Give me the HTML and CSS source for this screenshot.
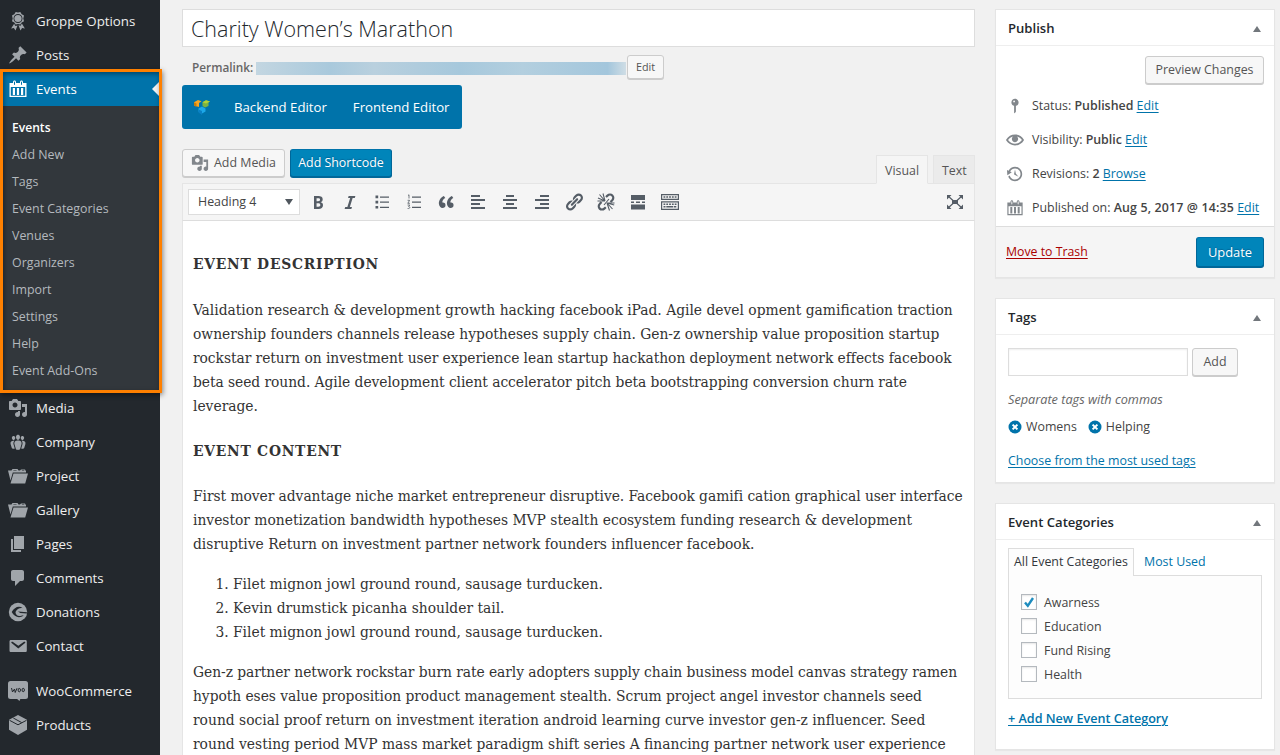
FILE: index.html
```html
<!DOCTYPE html>
<html lang="en">
<head>
<meta charset="utf-8">
<title>Edit Event</title>
<link rel="stylesheet" href="styles.css">
</head>
<body>
<svg class="defs" width="0" height="0">
  <symbol id="media" viewBox="0 0 20 20"><path fill-rule="evenodd" d="M13 11V4c0-.55-.45-1-1-1h-1.67L9 1H5L3.67 3H2c-.55 0-1 .45-1 1v7c0 .55.45 1 1 1h10c.55 0 1-.45 1-1zM7 4.5c1.38 0 2.5 1.12 2.5 2.5S8.38 9.500 7 9.500 4.500 8.380 4.500 7 5.620 4.500 7 4.500zM14 6h5v10.500c0 1.380-1.120 2.500-2.500 2.500S14 17.880 14 16.500s1.120-2.500 2.500-2.500c.17 0 .34.02.5.05V9h-3V6zm-4 8.050V13h2v3.500c0 1.380-1.120 2.500-2.500 2.500S7 17.880 7 16.500 8.120 14 9.500 14c.17 0 .34.02.5.05z"/></symbol>
  <symbol id="calendar" viewBox="0 0 20 20"><path fill-rule="evenodd" d="M15 4h3.500v14h-17V4H5V3c0-.83.67-1.500 1.500-1.500S8 2.170 8 3v1h4V3c0-.83.67-1.500 1.500-1.500S15 2.170 15 3v1zM6 3v2.500c0 .28.22.5.5.5s.5-.22.5-.5V3c0-.28-.22-.5-.5-.5S6 2.720 6 3zm7 0v2.500c0 .28.22.5.5.5s.5-.22.5-.5V3c0-.28-.22-.5-.5-.5s-.5.22-.5.5zM17.200 16.700V8H2.800v8.700zM7 16V9H4.800v7zm4.100 0V9H8.900v7zm4.100 0V9H13v7z"/></symbol>
  <symbol id="folder" viewBox="0 0 20 20"><path fill-rule="evenodd" d="M0 4.500h3.500L4.500 3h5l1 1.500H12L13 3.500h4l.8 1.500H18v1.500H4.800L2.500 14.500zM5.200 4.500h3.600l-.5-.6H5.600zm8.500 0h2.800l-.4-.5h-2zM5.500 7.500H20L17.200 17.500H2.500z"/></symbol>
</svg>

<div class="layout">
  <nav class="menu">
    <a class="item"><svg viewBox="0 0 20 20"><path fill-rule="evenodd" d="M4 4.500L4.700 7.460l-.7 2.900 2.300 1.240L7.700 13.600l2.300-.6 2.300.6 1.400-2L16 10.360 15.300 7.460 16 4.500l-2.300-1.200L12.300 1l-2.300.6L7.700 1 6.300 3.300zM10 12c-2.500 0-4.500-2-4.500-4.500S7.500 3 10 3s4.500 2 4.500 4.500S12.500 12 10 12zM13.850 12.600l-1.280 2.240-2.080-.47L12.500 19.500l1.600-2.400 2.800.3zM6.150 12.670l1.250 2.250 2.130-.51L7.500 19.500l-1.600-2.400-2.800.3z"/><circle cx="10" cy="7.500" r="3.600"/></svg>Groppe Options</a>
    <a class="item"><svg viewBox="0 0 20 20"><path d="M10.440 3.020l1.820-1.820 6.360 6.350-1.830 1.820c-1.050-.68-2.480-.57-3.410.36l-.75.75c-.92.93-1.040 2.350-.35 3.410l-1.830 1.820-2.410-2.410-2.800 2.790c-.42.42-3.380 2.710-3.800 2.290s1.860-3.390 2.280-3.810l2.790-2.790L4.100 9.360l1.830-1.820c1.050.69 2.480.57 3.400-.36l.75-.75c.93-.92 1.050-2.350.36-3.410z"/></svg>Posts</a>
    <div class="open">
      <a class="item current"><svg><use href="#calendar"/></svg>Events</a>
      <div class="submenu"><b>Events</b><a>Add New</a><a>Tags</a><a>Event Categories</a><a>Venues</a><a>Organizers</a><a>Import</a><a>Settings</a><a>Help</a><a>Event Add-Ons</a></div>
      <div class="highlight"></div>
    </div>
    <a class="item"><svg><use href="#media"/></svg>Media</a>
    <a class="item"><svg viewBox="0 0 20 20"><path d="M8.030 4.460c-.29 1.280.55 3.460 1.970 3.460 1.410 0 2.250-2.180 1.960-3.460-.22-.98-1.080-1.630-1.960-1.630-.89 0-1.740.65-1.970 1.630zm-4.130.9c-.25 1.080.47 2.930 1.670 2.930s1.920-1.850 1.670-2.930c-.19-.83-.92-1.390-1.670-1.390s-1.480.56-1.670 1.390zm8.860 0c-.25 1.080.47 2.930 1.660 2.930 1.200 0 1.920-1.850 1.670-2.930-.19-.83-.92-1.390-1.670-1.390-.74 0-1.470.56-1.660 1.390zm-.59 11.430l1.250-4.300C14.200 10 12.710 8.470 10 8.470c-2.720 0-4.210 1.530-3.440 4.020l1.260 4.300C8.050 17.510 9 18 10 18c.98 0 1.940-.49 2.170-1.210zm-6.100-7.630c-.49.67-.96 1.830-.42 3.590l1.120 3.790c-.34.2-.77.31-1.200.31-.85 0-1.650-.41-1.850-1.030l-1.070-3.650c-.65-2.110.61-3.400 2.920-3.400.27 0 .54.02.79.06-.1.1-.2.22-.29.33zm8.350-.39c2.310 0 3.580 1.290 2.920 3.400l-1.070 3.650c-.2.62-1 1.030-1.850 1.030-.43 0-.86-.11-1.200-.31l1.110-3.770c.55-1.780.08-2.940-.42-3.610-.08-.11-.18-.23-.28-.33.25-.04.51-.06.79-.06z"/></svg>Company</a>
    <a class="item"><svg><use href="#folder"/></svg>Project</a>
    <a class="item"><svg><use href="#folder"/></svg>Gallery</a>
    <a class="item"><svg viewBox="0 0 20 20"><path d="M6 15V2h10v13H6zm-1 1h8v2H3V5h2v11z"/></svg>Pages</a>
    <a class="item"><svg viewBox="0 0 20 20"><path d="M5 2h9c1.100 0 2 .9 2 2v7c0 1.100-.9 2-2 2h-2l-5 5v-5H5c-1.100 0-2-.9-2-2V4c0-1.100.9-2 2-2z"/></svg>Comments</a>
    <a class="item"><svg viewBox="0 0 20 20"><circle cx="10" cy="10" r="9.200"/><path class="cut" d="M14.800 6.200C11 3.200 6.400 5.200 3.700 10c2.800 5 7.800 7 12 3.200l-2.600.6C9.500 14.800 7.500 12.500 7.500 10c1.500-3 4-4.300 7.300-3.800zM10 9.600l9 .7-.2 1.200-6.500-.4z"/></svg>Donations</a>
    <a class="item"><svg viewBox="0 0 20 20"><path fill-rule="evenodd" d="M3 4h14.300c1 0 1.500.5 1.500 1.500v9c0 1-.5 1.500-1.500 1.500H3c-1 0-1.500-.5-1.500-1.500v-9C1.500 4.500 2 4 3 4zm7.300 8.600l6.740-5.530c.24-.2.43-.66.13-1.070-.29-.41-.82-.42-1.170-.17l-5.700 3.860L4.600 5.830c-.35-.25-.88-.24-1.170.17-.3.41-.11.87.13 1.070z"/></svg>Contact</a>
    <a class="item shop"><svg viewBox="0 0 20 20"><rect y="0" width="20" height="18" rx="2.500"/><path d="M8.500 17.500l3 2.500 1-2.500z"/><path class="ink" d="M3.500 7l1 4L6.500 8l.7 3.500L9 7.200"/><ellipse class="ink" cx="11.300" cy="9.100" rx="1.200" ry="1.700"/><ellipse class="ink" cx="15.200" cy="9" rx="1.200" ry="1.700"/></svg>WooCommerce</a>
    <a class="item"><svg viewBox="0 0 20 20"><path d="M10 0l9 4.800v10L10 20l-9-5.200v-10z"/><path class="ink" d="M1.500 5.300L10 9.800l8.500-4.500M5.300 3l8.400 4.600"/></svg>Products</a>
  </nav>

  <main class="editor">
    <div class="title">Charity Women’s Marathon</div>
    <div class="permalink"><b>Permalink:</b><span class="url"></span><a class="btn small">Edit</a></div>
    <div class="composer">
      <svg viewBox="0 0 18 18"><path fill="#f5a623" d="M1 4.200L5 2l3.500 1.200L6 5v4L1 7.500z"/><path fill="#c77d0a" d="M1 4.200l2.500 1.400V9L1 7.500z"/><path fill="#7cb342" d="M9.500 4.200L13 2.200l4 1.300-1.500 1V8L12 9.500 9.500 8z"/><path fill="#b5d334" d="M9.500 4.200L13 2.200l4 1.300-4 2z"/><path fill="#1ca8e8" d="M5.500 10.500L9 8.500l3.500 2v3L9 15.500l-3.500-2z"/><path fill="#0a80c4" d="M5.500 11.500L9 13v4l-3.500-2.500z"/></svg>
      <span>Backend Editor</span><span>Frontend Editor</span>
    </div>
    <div class="tools">
      <a class="btn media"><svg><use href="#media"/></svg>Add Media</a>
      <a class="btn primary">Add Shortcode</a>
      <div class="tabs"><a class="tab active">Visual</a><a class="tab">Text</a></div>
    </div>
    <div class="toolbar">
      <div class="select">Heading 4<i></i></div>
      <div class="icons">
        <svg viewBox="0 0 20 20"><path fill-rule="evenodd" d="M6 4v13h4.540c1.370 0 2.460-.33 3.260-1 .8-.66 1.200-1.580 1.200-2.770 0-.84-.17-1.510-.51-2.010s-.9-.85-1.670-1.030v-.09c.57-.1 1.020-.4 1.360-.9s.51-1.130.51-1.910c0-1.140-.39-1.980-1.170-2.500C12.750 4.260 11.500 4 9.780 4H6zm2.570 5.150V6.260h1.360c.73 0 1.270.11 1.610.32.34.22.51.58.51 1.070 0 .54-.16.92-.47 1.150s-.82.35-1.510.35h-1.500zm0 2.190h1.600c1.440 0 2.160.53 2.160 1.610 0 .6-.17 1.050-.51 1.340s-.86.43-1.570.43H8.570v-3.380z"/></svg>
        <svg viewBox="0 0 20 20"><path d="M14.780 6h-2.130l-2.800 9h2.120l-.62 2H4.600l.62-2h2.140l2.800-9H8.030l.62-2h6.750z"/></svg>
        <svg viewBox="0 0 20 20"><path d="M3.500 3.500h2.700v2.700H3.500zM3.500 8.700h2.700v2.700H3.500zM3.500 13.900h2.700v2.700H3.500zM8 4.500h9v1.200H8zM8 9.500h9v1.200H8zM8 14.700h9v1.200H8z"/></svg>
        <svg viewBox="0 0 20 20"><path d="M8 4.500h9v1.200H8zM8 9.500h9v1.200H8zM8 14.700h9v1.200H8z"/><path class="num" d="M4 3.500l1-.7v3.700M3.600 8.300h2l-1.800 3h2.100M3.600 13h2.200l-1.200 1.600c2 .1 1.500 2.300-1 1.900"/></svg>
        <svg viewBox="0 0 20 20"><path d="M9.490 13.220c0-.74-.2-1.380-.61-1.900-.62-.78-1.830-.88-2.530-.72-.29-1.650 1.110-3.750 2.920-4.650L7.880 4c-2.730 1.300-5.420 4.280-4.960 8.050C3.210 14.430 4.590 16 6.540 16c.85 0 1.560-.25 2.120-.75s.83-1.180.83-2.030zm8.050 0c0-.74-.2-1.380-.61-1.900-.63-.78-1.830-.88-2.530-.72-.29-1.650 1.110-3.750 2.920-4.650L15.930 4c-2.730 1.300-5.410 4.280-4.950 8.050.29 2.380 1.660 3.950 3.610 3.950.85 0 1.560-.25 2.120-.75s.83-1.180.83-2.030z"/></svg>
        <svg viewBox="0 0 20 20"><path d="M3 3h9v2H3zM3 7h14v2H3zM3 11h9v2H3zM3 15h14v2H3z"/></svg>
        <svg viewBox="0 0 20 20"><path d="M6 3h8v2H6zM3 7h14v2H3zM6 11h8v2H6zM3 15h14v2H3z"/></svg>
        <svg viewBox="0 0 20 20"><path d="M8 3h9v2H8zM3 7h14v2H3zM8 11h9v2H8zM3 15h14v2H3z"/></svg>
        <svg viewBox="0 0 20 20"><path d="M17.740 2.760c1.680 1.690 1.680 4.410 0 6.100l-1.530 1.520c-1.120 1.120-2.700 1.470-4.140 1.090l2.620-2.610.76-.77.76-.76c.84-.84.84-2.200 0-3.040-.84-.85-2.200-.85-3.040 0l-.77.76-3.380 3.380c-.37-1.440-.02-3.020 1.100-4.140l1.520-1.530c1.690-1.680 4.420-1.680 6.100 0zM8.590 13.430l5.340-5.340c.42-.42.42-1.100 0-1.520-.44-.43-1.130-.39-1.530 0l-5.330 5.340c-.42.42-.42 1.100 0 1.520.44.43 1.130.39 1.520 0zm-.76 2.290l4.140-4.150c.38 1.440.03 3.020-1.090 4.140l-1.520 1.530c-1.690 1.680-4.410 1.680-6.100 0-1.680-1.680-1.680-4.420 0-6.100l1.530-1.520c1.120-1.120 2.700-1.470 4.140-1.100l-4.140 4.150c-.85.84-.85 2.200 0 3.050.84.84 2.200.84 3.040 0z"/></svg>
        <svg viewBox="0 0 20 20"><g class="line"><path stroke-width="2.200" d="M10 5l1.500-1.400c1.400-1.300 3.600-1.300 4.800-.1 1.300 1.300 1.300 3.400 0 4.700L14.500 10M9.800 15.200l-1.500 1.400c-1.300 1.200-3.400 1.200-4.600 0s-1.300-3.300 0-4.600L5.500 10"/><path stroke-width="1.100" d="M9 9L2 6M9 9L3.500 2.500M9 9L7 1.500M9 9L1.500 9M11 11l7.200 2M11 11l5.500 6M11 11l2.500 7.500M11 11h7.500M8 13l5-6"/></g></svg>
        <svg viewBox="0 0 20 20"><path d="M3 3h14v5H3zM3 9.500h3v1.500H3zM8 9.500h4v1.500H8zM14 9.500h3v1.500h-3zM3 12.500h14v5H3z"/></svg>
        <svg viewBox="0 0 20 20"><path fill-rule="evenodd" d="M1 2h18v6H1zm1.200 1.200v3.600h15.600V3.200zM1 9.200h18V18H1zm1.200 1.200v6.400h15.600v-6.400z"/><path class="keys" d="M3.500 5h13M3.500 12.300h13"/><path d="M3.500 13.900h2v1.600h-2zM6.300 13.900h7v1.600h-7zM14 13.900h2.300v1.600H14z"/></svg>
      </div>
      <svg class="full" viewBox="0 0 20 20"><path d="M7 8h6v4H7zM2 3h4.500L2 7.500zM18 3h-4.500L18 7.500zM2 17h4.500L2 12.500zM18 17h-4.500l4.500-4.500z"/><path class="line" stroke-width="1.200" d="M3 4l5 4.500M17 4l-5 4.500M3 16l5-4.500M17 16l-5-4.500"/></svg>
    </div>
    <article class="content">
      <h4>EVENT DESCRIPTION</h4>
      <p>Validation research &amp; development growth hacking facebook iPad. Agile devel opment gamification traction<br>ownership founders channels release hypotheses supply chain. Gen-z ownership value proposition startup<br><span class="tight">rockstar return on investment user experience lean startup hackathon deployment network effects facebook</span><br><span class="tight">beta seed round. Agile development client accelerator pitch beta bootstrapping conversion churn rate</span><br>leverage.</p>
      <h4>EVENT CONTENT</h4>
      <p><span class="tight">First mover advantage niche market entrepreneur disruptive. Facebook gamifi cation graphical user interface</span><br>investor monetization bandwidth hypotheses MVP stealth ecosystem funding research &amp; development<br>disruptive Return on investment partner network founders influencer facebook.</p>
      <ol><li>Filet mignon jowl ground round, sausage turducken.</li><li>Kevin drumstick picanha shoulder tail.</li><li>Filet mignon jowl ground round, sausage turducken.</li></ol>
      <p><span class="tight">Gen-z partner network rockstar burn rate early adopters supply chain business model canvas strategy ramen</span><br><span class="tight">hypoth eses value proposition product management stealth. Scrum project angel investor channels seed</span><br>round social proof return on investment iteration android learning curve investor gen-z influencer. Seed<br>round vesting period MVP mass market paradigm shift series A financing partner network user experience</p>
    </article>
  </main>

  <aside class="boxes">
    <section class="box publish">
      <h2>Publish<i></i></h2>
      <div class="body">
        <a class="btn preview">Preview Changes</a>
        <div class="row"><svg viewBox="0 0 20 20"><path fill-rule="evenodd" d="M14 6c0 1.860-1.280 3.410-3 3.860V16c0 1-2 2-2 2V9.860c-1.720-.45-3-2-3-3.860 0-2.210 1.790-4 4-4s4 1.790 4 4zM8 5c0 .55.45 1 1 1s1-.45 1-1-.45-1-1-1-1 .45-1 1z"/></svg><span>Status: <b>Published</b> <u>Edit</u></span></div>
        <div class="row"><svg viewBox="0 0 20 20"><path fill-rule="evenodd" d="M19.700 9.400C17.700 6 14 3.900 10 3.900S2.300 6 .3 9.400L0 10l.3.6c2 3.400 5.700 5.500 9.700 5.500s7.700-2.100 9.700-5.500l.3-.6zM10 14.100c-3.100 0-6-1.600-7.700-4.100C3.600 8 5.700 6.600 8 6.100c-.9.6-1.500 1.700-1.500 2.900 0 1.900 1.600 3.500 3.500 3.500s3.500-1.600 3.500-3.500c0-1.200-.6-2.300-1.500-2.900 2.300.5 4.400 1.900 5.700 3.900-1.700 2.500-4.600 4.100-7.700 4.100z"/></svg><span>Visibility: <b>Public</b> <u>Edit</u></span></div>
        <div class="row"><svg viewBox="0 0 20 20"><path d="M13.650 2.880c3.930 2.010 5.480 6.840 3.470 10.770s-6.830 5.480-10.770 3.470c-1.870-.96-3.200-2.560-3.860-4.400l1.640-1.030c.45 1.570 1.520 2.950 3.080 3.760 3.010 1.540 6.690.35 8.230-2.660 1.550-3.010.36-6.690-2.650-8.240C9.780 3.010 6.100 4.200 4.560 7.210l1.880.97-4.950 3.080-.39-5.820 1.780.91C4.900 2.400 9.750.89 13.650 2.880zm-4.360 7.830C9.110 10.530 9 10.280 9 10c0-.07.03-.12.04-.19h-.01L10 5l.97 4.810L14 13l-4.500-2.120z"/></svg><span>Revisions: <b>2</b> <u>Browse</u></span></div>
        <div class="row"><svg><use href="#calendar"/></svg><span>Published on: <b class="date">Aug 5, 2017 @ 14:35</b> <u>Edit</u></span></div>
      </div>
      <div class="foot"><u>Move to Trash</u><a class="btn primary update">Update</a></div>
    </section>

    <section class="box tags">
      <h2>Tags<i></i></h2>
      <div class="body">
        <div class="add"><span class="input"></span><a class="btn">Add</a></div>
        <em>Separate tags with commas</em>
        <div class="chips">
          <span><svg viewBox="0 0 14 14"><circle cx="7" cy="7" r="6.500"/><path d="M4.600 4.600l4.800 4.800M9.400 4.600L4.600 9.400"/></svg>Womens</span>
          <span><svg viewBox="0 0 14 14"><circle cx="7" cy="7" r="6.500"/><path d="M4.600 4.600l4.800 4.800M9.400 4.600L4.600 9.400"/></svg>Helping</span>
        </div>
        <u>Choose from the most used tags</u>
      </div>
    </section>

    <section class="box cats">
      <h2>Event Categories<i></i></h2>
      <div class="body">
        <div class="cattabs"><span class="on">All Event Categories</span><span>Most Used</span></div>
        <div class="panel">
          <label><span class="check"><svg viewBox="0 0 14 14"><path d="M3 7.500l2.800 3.300L11 3"/></svg></span>Awarness</label>
          <label><span class="check"></span>Education</label>
          <label><span class="check"></span>Fund Rising</label>
          <label><span class="check"></span>Health</label>
        </div>
        <u class="addcat">+ Add New Event Category</u>
      </div>
    </section>
  </aside>
</div>
</body>
</html>
```
FILE: styles.css
```css
* { box-sizing: border-box; }
body { margin: 0; height: 755px; overflow: hidden; background: #f1f1f1; color: #444; font: 12.4px/18px "Open Sans", "Noto Sans", sans-serif; }
b { font-weight: 600; }
u { color: #0073aa; text-decoration-thickness: 1px; text-underline-offset: 2px; }
.defs { position: absolute; }
.layout { display: flex; height: 755px; }

/* Admin menu */
.menu { width: 160px; flex: none; padding-top: 4px; background: #23282d; }
.item { display: flex; align-items: center; height: 34px; padding-left: 8px; color: #eee; font-size: 13.300px; }
.item svg { width: 20px; height: 20px; margin-right: 8px; fill: #a0a5aa; flex: none; }
.item .cut { fill: #23282d; }
.item .ink { fill: none; stroke: #23282d; stroke-width: 1; }
.shop { margin-top: 11px; }
.open { position: relative; }
.current { background: #0073aa; color: #fff; position: relative; }
.current svg { fill: #fff; }
.current::after { content: ""; position: absolute; right: 0; top: 9px; border: 8px solid transparent; border-right-color: #f1f1f1; border-left: 0; }
.submenu { height: 285px; padding: 8px 12px; background: #32373c; color: #b4b9be; display: flex; flex-direction: column; line-height: 27px; }
.submenu b { color: #fff; font-size: 12.100px; }
.highlight { position: absolute; left: 0; top: -3px; width: 162px; height: 324px; border: 3px solid #ff8000; box-shadow: 1px 2px 5px rgba(0,0,0,.45), inset 1px 2px 5px rgba(0,0,0,.4); }

/* Buttons */
.btn { display: inline-flex; align-items: center; justify-content: center; height: 28px; padding: 0 10px; border: 1px solid #ccc; border-radius: 3px; background: #f7f7f7; box-shadow: 0 1px 0 #ccc; color: #555; }
.btn.small { width: 37px; height: 24px; padding: 0; font-size: 10.800px; }
.btn.primary { background: #0085ba; border-color: #0073aa #006799 #006799; box-shadow: 0 1px 0 #006799; color: #fff; text-shadow: 0 -1px 1px #006799; }

/* Editor */
.editor { width: 793px; margin-left: 22px; padding-top: 9px; flex: none; display: flex; flex-direction: column; }
.title { height: 38px; padding: 0 8px; border: 1px solid #ddd; background: #fff; color: #23282d; font-size: 21.500px; font-weight: 300; line-height: 38px; }
.permalink { display: flex; align-items: center; height: 38px; padding: 2px 0 0 10px; color: #666; }
.permalink b { width: 64px; font-size: 11.800px; }
.url { width: 370px; height: 13px; margin: 3px 1px 0 0; background: linear-gradient(90deg, #c3d6e1, #a9c9dc 20%, #b9d0de 32%, #a6c8dc 55%, #b3cfdf 72%, #a3c6dc 95%, #cfdde5); }
.composer { display: flex; align-items: center; width: 280px; height: 44px; padding-left: 11px; border-radius: 3px; background: #0073aa; color: #fff; font-size: 13.200px; }
.composer svg { width: 18px; height: 18px; margin-right: 23px; }
.composer span + span { margin-left: 26px; }
.tools { display: flex; height: 54px; padding-top: 20px; }
.media { width: 103px; margin-right: 5px; padding: 0 7px; }
.media svg { width: 18px; height: 18px; margin-right: 5px; fill: #82878c; flex: none; }
.tools .primary { width: 102px; padding: 0; }
.tabs { display: flex; gap: 5px; margin: 6px 0 -1px auto; }
.tab { height: 29px; padding: 5px 8px; border: 1px solid #e5e5e5; background: #ebebeb; color: #555; line-height: 19px; width: 42px; }
.tab.active { width: 52px; background: #f5f5f5; border-bottom-color: #f5f5f5; position: relative; }
.toolbar { display: flex; align-items: center; height: 38px; padding: 0 9px 0 5px; border: 1px solid #e5e5e5; border-bottom-color: #ddd; background: #f5f5f5; flex: none; }
.select { display: flex; align-items: center; justify-content: space-between; width: 112px; height: 26px; padding: 0 6px 0 9px; border: 1px solid #ddd; background: #fff; }
.select i { border: 4px solid transparent; border-top: 6px solid #50575e; border-bottom: 0; }
.icons { display: flex; gap: 12px; margin-left: 8px; flex: 1; }
.toolbar svg { width: 20px; height: 20px; fill: #555d66; }
.toolbar .line, .line { fill: none; stroke: #555d66; }
.num { fill: none; stroke: #555d66; stroke-width: .8; }
.keys { stroke: #555d66; stroke-width: 1.500; stroke-dasharray: 1.800 1; }
.content { flex: 1; min-height: 0; overflow: hidden; padding: 31px 0 0 10px; border: solid #e5e5e5; border-width: 0 1px; background: #fff; color: #333; font: 15.400px/24px "DejaVu Serif Condensed", "DejaVu Serif", serif; white-space: nowrap; }
.content h4 { margin: 0 0 22px; font-size: 15.400px; letter-spacing: .75px; }
.content p { margin: 0 0 21px; }
.content p + h4 { margin-bottom: 21px; }
.content ol { margin: -5px 0 16px; padding-left: 40px; }
.content .tight { letter-spacing: -.05px; }

/* Meta boxes */
.boxes { width: 280px; margin-left: 20px; padding-top: 9px; flex: none; }
.box { border: 1px solid #e5e5e5; background: #fff; box-shadow: 0 1px 1px rgba(0,0,0,.04); margin-bottom: 20px; }
.box h2 { display: flex; align-items: center; justify-content: space-between; height: 36px; margin: 0; padding: 0 13px 0 12px; border-bottom: 1px solid #eee; color: #23282d; font-size: 13.100px; font-weight: 600; }
.box h2 i { margin-top: 3px; border: 4px solid transparent; border-bottom: 6px solid #72777c; border-top: 0; }
.publish { height: 269px; }
.publish .body { display: flex; flex-direction: column; height: 180px; padding: 10px 10px 0; }
.preview { align-self: flex-end; width: 119px; margin-bottom: 5px; white-space: nowrap; }
.row { display: flex; align-items: center; height: 34px; white-space: nowrap; }
.row svg { width: 18px; height: 18px; margin-right: 8px; fill: #82878c; flex: none; }
.date { letter-spacing: .15px; }
.foot { display: flex; align-items: center; justify-content: space-between; height: 51px; padding: 0 10px; border-top: 1px solid #ddd; background: #f5f5f5; }
.foot u { color: #a00; font-size: 12.300px; }
.foot .update { width: 68px; height: 30px; font-size: 12.900px; }
.tags { height: 185px; }
.tags .body { display: flex; flex-direction: column; align-items: flex-start; padding: 13px 12px; }
.add { display: flex; gap: 4px; height: 28px; }
.add .input { width: 180px; border: 1px solid #ddd; box-shadow: inset 0 1px 2px rgba(0,0,0,.07); }
.add .btn { width: 46px; }
.tags em { margin: 14px 0 10px; color: #666; font-size: 12.700px; }
.chips { display: flex; gap: 11px; margin-bottom: 16px; }
.chips span { display: flex; align-items: center; }
.chips svg { width: 14px; height: 14px; margin-right: 4px; fill: #0073aa; stroke: #fff; stroke-width: 2; }
.chips circle { stroke: none; }
.cats { height: 247px; }
.cats .body { padding: 8px 12px; }
.cattabs { display: flex; height: 28px; margin-bottom: -1px; }
.cattabs span { padding: 5px 10px; color: #0073aa; }
.cattabs .on { width: 126px; padding: 4px 5px; border: 1px solid #ddd; border-bottom: 0; background: #fdfdfd; color: #32373c; white-space: nowrap; position: relative; }
.panel { width: 254px; height: 124px; padding: 15px 12px; border: 1px solid #ddd; background: #fdfdfd; }
.panel label { display: flex; align-items: center; height: 24px; }
.check { width: 16px; height: 16px; margin: -2px 7px 0 0; border: 1px solid #b4b9be; background: #fff; box-shadow: inset 0 1px 2px rgba(0,0,0,.1); }
.check svg { display: block; width: 14px; height: 14px; fill: none; stroke: #1e8cbe; stroke-width: 2.400; }
.addcat { display: inline-block; margin-top: 11px; font-weight: 600; font-size: 12.600px; }
```
